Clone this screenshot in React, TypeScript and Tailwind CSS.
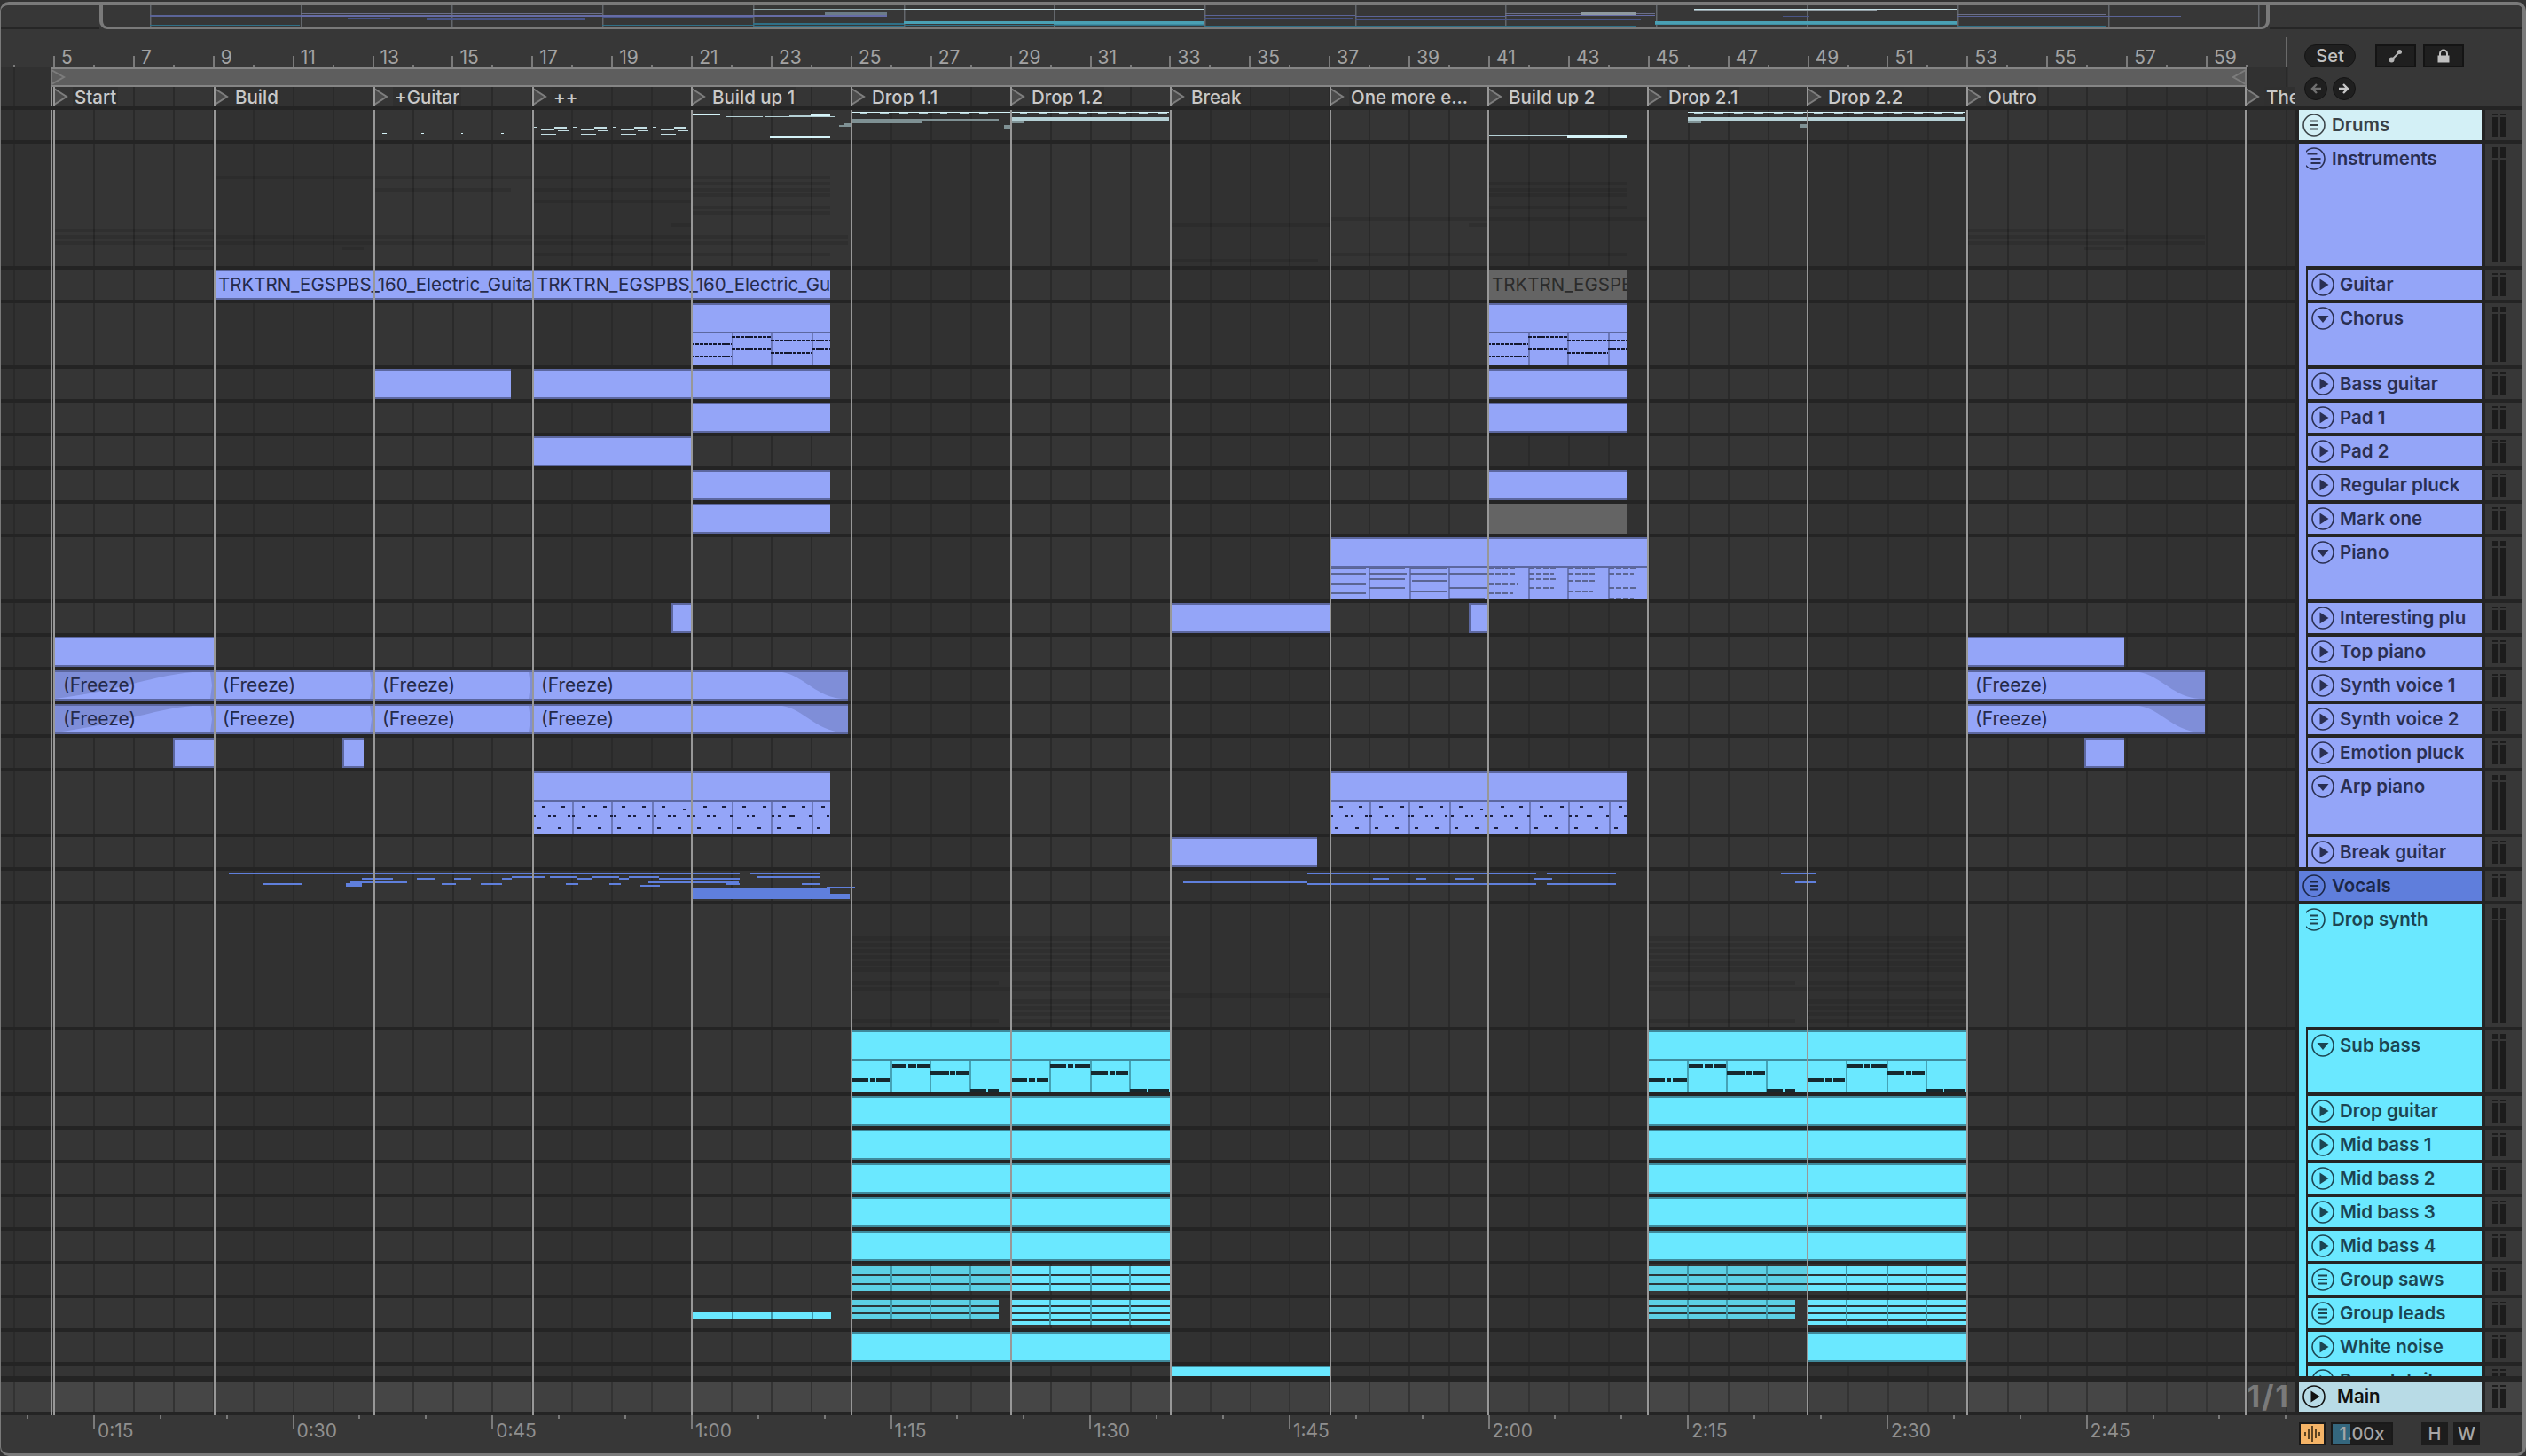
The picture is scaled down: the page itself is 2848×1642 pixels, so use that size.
import type { ReactNode } from 'react';

// all x values below are page pixels, the left column starts at x=1
const L = (x: number) => x - 1;
const barX = (bar: number) => Math.round(60 + (bar - 5) * 44.95);

const LOCATORS: [number, string][] = [
  [60, 'Start'],
  [241, 'Build'],
  [421, '+Guitar'],
  [600, '++'],
  [779, 'Build up 1'],
  [959, 'Drop 1.1'],
  [1139, 'Drop 1.2'],
  [1319, 'Break'],
  [1499, 'One more e...'],
  [1677, 'Build up 2'],
  [1857, 'Drop 2.1'],
  [2037, 'Drop 2.2'],
  [2217, 'Outro'],
  [2531, 'The'],
];

const Grid = ({ main = false }: { main?: boolean }) => {
  const bands = [];
  for (let b = 5; b < 61; b += 4) bands.push(b);
  const lines = [];
  for (let b = 4; b <= 61; b++) lines.push(barX(b));
  return (
    <div className={`absolute inset-0 ${main ? 'bg-[#404040]' : 'bg-[#313131]'}`}>
      {bands.map((b, i) =>
        i % 2 === 0 ? (
          <div
            key={b}
            className={`absolute top-0 bottom-0 ${main ? 'bg-[#464646]' : 'bg-[#353535]'}`}
            style={{ left: L(barX(b)), width: barX(b + 4) - barX(b) }}
          />
        ) : null,
      )}
      {lines.map((x) => (
        <div
          key={x}
          className={`absolute top-0 bottom-0 w-[2px] ${main ? 'bg-[#333333]' : 'bg-[#2a2a2a]'}`}
          style={{ left: L(x) }}
        />
      ))}
    </div>
  );
};

const LocatorLines = () => (
  <>
    {[57, ...LOCATORS.map((l) => l[0])].map((x) => (
      <div
        key={x}
        className="absolute top-0 bottom-0 z-20 w-[2px] bg-[#989898]"
        style={{ left: L(x) }}
      />
    ))}
  </>
);

const CLIP = {
  blue: {
    body: 'bg-[#94a5f8]',
    strip: 'bg-[#5c679f]',
    text: 'text-[#252a4a]',
    line: 'bg-[#6a77b8]',
  },
  cyan: {
    body: 'bg-[#6ae8ff]',
    strip: 'bg-[#3f8a9c]',
    text: 'text-[#1c4552]',
    line: 'bg-[#45a2b5]',
  },
  grey: {
    body: 'bg-[#646464]',
    strip: 'bg-[#646464]',
    text: 'text-[#2b2b2b]',
    line: 'bg-[#555555]',
  },
};

type ClipProps = {
  x0: number;
  x1: number;
  h?: number;
  theme?: keyof typeof CLIP;
  label?: string;
  edge?: boolean;
  split?: number;
  bars?: number[];
  noBottom?: boolean;
  children?: ReactNode;
};

const Clip = ({ x0, x1, h = 34, theme = 'blue', label, edge, split, bars, noBottom, children }: ClipProps) => {
  const t = CLIP[theme];
  return (
    <div
      className={`absolute top-0 overflow-hidden ${t.body}`}
      style={{ left: L(x0), width: x1 - x0, height: h }}
    >
      <div className={`absolute top-0 left-0 right-0 h-[2px] ${t.strip}`} />
      {split ? (
        <div className={`absolute left-0 right-0 h-[2px] ${t.strip}`} style={{ top: split }} />
      ) : noBottom ? null : (
        <div className={`absolute bottom-0 left-0 right-0 h-[2px] ${t.strip}`} />
      )}
      {edge ? <div className={`absolute top-0 bottom-0 left-0 w-[2px] ${t.strip}`} /> : null}
      {bars?.map((b) => (
        <div
          key={b}
          className={`absolute bottom-0 w-[2px] ${t.line}`}
          style={{ left: b - x0, top: (split ?? 0) + 2 }}
        />
      ))}
      {children}
      {label ? (
        <span className={`absolute top-[3px] left-[5px] text-[20.5px] leading-[28px] whitespace-nowrap ${t.text}`}>
          {label}
        </span>
      ) : null}
    </div>
  );
};

type Mark = [number, number, number, number];

const Marks = ({ list, className }: { list: Mark[]; className: string }) => (
  <>
    {list.map(([x0, x1, y, h], i) => (
      <div
        key={i}
        className={`absolute ${className}`}
        style={{ left: L(x0), width: x1 - x0, top: y, height: h }}
      />
    ))}
  </>
);

// notes and ghosts, y is local to the row
const shift = (list: Mark[], dx: number): Mark[] => list.map(([a, b, y, h]) => [a + dx, b + dx, y, h]);

const DASH = 'bg-[repeating-linear-gradient(90deg,#14182e_0px,#14182e_4px,transparent_4px,transparent_5px)]';

const Freeze = ({ x0, x1, fadeIn, fadeOut }: { x0: number; x1: number; fadeIn?: boolean; fadeOut?: boolean }) => {
  const w = x1 - x0;
  return (
    <Clip x0={x0} x1={x1}>
      <svg className="absolute inset-0" width={w} height={34}>
        {fadeIn ? <path d="M0 2 H156 C110 6 70 24 0 32 Z" fill="#7f8ed8" /> : null}
        {fadeOut ? <path d={`M${w - 74} 2 C${w - 50} 6 ${w - 36} 30 ${w - 6} 32 H${w} V2 Z`} fill="#7f8ed8" /> : null}
        <path d={`M${w - 4} 2 L${w} 2 L${w} 32 L${w - 4} 32 L${w - 2} 17 Z`} fill={fadeOut ? 'none' : '#7f8ed8'} />
      </svg>
      <span className="absolute top-[3px] left-[10px] text-[21px] leading-[28px] text-[#252a4a]">(Freeze)</span>
    </Clip>
  );
};

const chorusNotes = (x: number): Mark[] => [
  [x, x + 46, 45, 2],
  [x, x + 46, 59, 2],
  [x + 46, x + 90, 37, 2],
  [x + 46, x + 90, 51, 2],
  [x + 90, x + 136, 41, 2],
  [x + 90, x + 136, 55, 2],
  [x + 136, x + 157, 41, 2],
  [x + 136, x + 157, 51, 2],
];

const Chorus = ({ x }: { x: number }) => (
  <>
    <Clip x0={x} x1={x + 157} h={70} split={32} bars={[x + 46, x + 90, x + 136]} />
    <Marks list={chorusNotes(x)} className={DASH} />
  </>
);

const PIANO_A: Mark[] = [
  [1500, 1540, 34, 2], [1500, 1540, 40, 2], [1500, 1540, 52, 2], [1500, 1540, 62, 2],
  [1544, 1584, 34, 2], [1544, 1586, 40, 2], [1544, 1584, 46, 2], [1544, 1584, 56, 2],
  [1590, 1632, 34, 2], [1590, 1632, 40, 2], [1592, 1632, 48, 2], [1590, 1632, 60, 2],
  [1634, 1676, 40, 2], [1634, 1676, 56, 2], [1634, 1674, 68, 2],
];
const PIANO_B: Mark[] = [
  [1678, 1710, 34, 2], [1678, 1710, 40, 2], [1678, 1712, 52, 2], [1678, 1706, 62, 2],
  [1724, 1756, 34, 2], [1724, 1752, 40, 2], [1724, 1754, 46, 2], [1724, 1752, 56, 2],
  [1768, 1800, 34, 2], [1768, 1798, 40, 2], [1768, 1800, 48, 2], [1768, 1796, 60, 2],
  [1814, 1846, 34, 2], [1814, 1842, 40, 2], [1814, 1844, 56, 2], [1814, 1842, 68, 2],
];

const ARP_TOP = [611, 633, 656, 680, 701, 724, 746, 793, 814, 837, 860, 882, 904, 926];
const ARP_MID = [601, 618, 624, 640, 645, 663, 670, 688, 692, 708, 714, 730, 737, 753, 759, 775, 781, 797, 804, 823, 842, 848, 870, 877, 890, 893, 912, 932];
const arpDots = (dx: number): Mark[] => [
  ...ARP_TOP.map((x): Mark => [x + dx, x + dx + 4, 39, 2]),
  [770 + dx, 773 + dx, 42, 2],
  ...ARP_MID.map((x): Mark => [x + dx, x + dx + 3, 49, 2]),
  ...Array.from({ length: 15 }, (_, i): Mark => [606 + dx + i * 22.5, 610 + dx + i * 22.5, 63, 2]),
];

const Arp = ({ x0, x1, dx }: { x0: number; x1: number; dx: number }) => (
  <>
    <Clip x0={x0} x1={x1} h={70} split={32} bars={[645, 689, 735, 825, 869, 915].map((b) => b + dx)} />
    <Marks list={arpDots(dx)} className="bg-[#1c2040]" />
  </>
);

const SUB_BASS: Mark[] = [
  [960, 979, 54, 4], [981, 986, 54, 4], [988, 1004, 54, 4],
  [1006, 1022, 38, 4], [1024, 1033, 38, 4], [1034, 1048, 38, 4],
  [1049, 1070, 46, 4], [1071, 1077, 46, 4], [1078, 1092, 46, 4],
  [1094, 1112, 66, 4], [1114, 1126, 66, 4],
  [1140, 1158, 54, 4], [1160, 1167, 54, 4], [1169, 1182, 54, 4],
  [1184, 1202, 38, 4], [1204, 1210, 38, 4], [1212, 1229, 38, 4],
  [1230, 1249, 46, 4], [1251, 1257, 46, 4], [1258, 1272, 46, 4],
  [1274, 1293, 66, 4], [1294, 1318, 66, 4],
];

const SubBass = ({ dx }: { dx: number }) => (
  <>
    <Clip x0={959 + dx} x1={1139 + dx} theme="cyan" h={70} split={32} bars={[1004, 1048, 1093].map((b) => b + dx)} />
    <Clip x0={1139 + dx} x1={1319 + dx} theme="cyan" h={70} split={32} bars={[1183, 1229, 1273].map((b) => b + dx)} />
    <Marks list={shift(SUB_BASS, dx)} className="bg-[#16292f]" />
  </>
);

const Wide = ({ dx = 0 }: { dx?: number }) => (
  <>
    <Clip x0={959 + dx} x1={1139 + dx} theme="cyan" />
    <Clip x0={1139 + dx} x1={1319 + dx} theme="cyan" />
  </>
);

const Stripes = ({ x0, x1, top, bottom, lines, dim, bars }: { x0: number; x1: number; top: number; bottom: number; lines: number[]; dim?: boolean; bars: number[] }) => (
  <div
    className={`absolute ${dim ? 'bg-[#5ccfe4]' : 'bg-[#6ae8ff]'}`}
    style={{ left: L(x0), width: x1 - x0, top, height: bottom - top }}
  >
    {lines.map((y) => (
      <div key={y} className="absolute left-0 right-0 h-[2px] bg-[#2b3538]" style={{ top: y - top }} />
    ))}
    {bars.map((b) => (
      <div key={b} className="absolute top-0 bottom-0 w-[2px] bg-[#3f98aa]" style={{ left: b - x0 }} />
    ))}
  </div>
);

const Saws = ({ dx }: { dx: number }) => (
  <>
    <Stripes x0={959 + dx} x1={1139 + dx} top={2} bottom={30} lines={[11, 21]} dim bars={[1004 + dx, 1048 + dx, 1093 + dx]} />
    <Stripes x0={1139 + dx} x1={1319 + dx} top={2} bottom={30} lines={[11, 21]} bars={[1183 + dx, 1229 + dx, 1273 + dx]} />
  </>
);

const Leads = ({ dx }: { dx: number }) => (
  <>
    <Stripes x0={959 + dx} x1={1126 + dx} top={2} bottom={23} lines={[8, 16]} dim bars={[1004 + dx, 1048 + dx, 1093 + dx]} />
    <Stripes x0={1139 + dx} x1={1319 + dx} top={2} bottom={30} lines={[8, 16, 24]} bars={[1183 + dx, 1229 + dx, 1273 + dx]} />
  </>
);

const GHOST_INST: Mark[] = [
  [241, 936, 36, 4],
  [779, 936, 43, 4], [1677, 1834, 43, 4],
  [421, 576, 50, 4], [600, 936, 50, 4], [1677, 1834, 50, 4],
  [779, 936, 56, 4], [1677, 1834, 56, 4],
  [600, 779, 63, 4],
  [779, 936, 70, 4], [1677, 1834, 70, 4],
  [779, 936, 76, 4],
  [1499, 1857, 83, 4],
  [757, 779, 90, 4], [1319, 1499, 90, 4], [1656, 1677, 90, 4],
  [61, 241, 96, 4], [2217, 2395, 96, 4],
  [61, 956, 103, 4], [2217, 2486, 103, 4],
  [61, 956, 110, 4], [2217, 2486, 110, 4],
  [195, 241, 116, 4], [386, 410, 116, 4], [2350, 2395, 116, 4],
  [600, 936, 123, 4], [1499, 1834, 123, 4],
  [1319, 1486, 130, 4],
];

const ghostDropBase: Mark[] = [
  [959, 1319, 36, 5], [959, 1319, 43, 5], [959, 1319, 50, 5], [959, 1319, 57, 5],
  [959, 1319, 64, 5], [959, 1319, 71, 5],
  [959, 1126, 86, 5], [1139, 1319, 86, 5],
  [959, 1139, 93, 5], [1139, 1319, 93, 5],
  [1139, 1319, 107, 5], [1139, 1319, 114, 5], [1139, 1319, 121, 5],
  [959, 1126, 129, 5], [1139, 1319, 129, 5],
];
const GHOST_DROP: Mark[] = [...ghostDropBase, ...shift(ghostDropBase, 898), [1319, 1499, 100, 5]];

const DRUM_BRIGHT: Mark[] = [
  [780, 812, 4, 2], [812, 842, 4, 1], [868, 936, 29, 3], [914, 936, 5, 2],
  [960, 1139, 2, 1], [1140, 1318, 2, 1], [1903, 2216, 2, 1],
  [1767, 1834, 28, 4],
  [431, 436, 26, 1], [475, 478, 26, 1], [520, 522, 26, 1], [565, 568, 26, 1],
];
const DRUM_MID: Mark[] = [
  [818, 860, 7, 1], [862, 942, 7, 1], [890, 914, 6, 1],
  [1140, 1318, 8, 5], [1903, 2216, 8, 5], [1677, 1767, 28, 1],
  [970, 978, 3, 1], [992, 1002, 3, 1], [1014, 1024, 3, 1], [1036, 1046, 3, 1], [1060, 1068, 3, 1], [1082, 1092, 3, 1], [1104, 1114, 3, 1],
  [1150, 1158, 3, 1], [1172, 1180, 3, 1], [1194, 1204, 3, 1], [1216, 1226, 3, 1], [1238, 1248, 3, 1], [1262, 1270, 3, 1], [1284, 1294, 3, 1], [1306, 1316, 3, 1],
  ...Array.from({ length: 14 }, (_, i): Mark => [1910 + i * 22.5, 1920 + i * 22.5, 3, 1]),
];
const DRUM_DIM: Mark[] = [
  [960, 1126, 10, 2], [960, 1040, 13, 2], [952, 959, 15, 4], [946, 952, 17, 2], [1132, 1139, 17, 4],
  [1140, 1155, 13, 2], [1903, 1918, 13, 2], [2030, 2037, 16, 4],
];
const ppBlock = (x: number): Mark[] => [
  [x, x + 4, 19, 1], [x + 9, x + 24, 21, 2], [x + 24, x + 38, 19, 2], [x + 9, x + 26, 27, 1], [x + 28, x + 40, 23, 1],
];
const DRUM_PP: Mark[] = [...ppBlock(601), ...ppBlock(646), ...ppBlock(691), ...ppBlock(736)];

const VOCAL: Mark[] = [
  [258, 834, 2, 2], [846, 924, 2, 2],
  [408, 443, 8, 2], [470, 490, 8, 2], [512, 531, 8, 2], [566, 577, 8, 2], [577, 615, 6, 2], [620, 650, 6, 2],
  [650, 668, 8, 2], [668, 698, 6, 2], [698, 709, 8, 2], [709, 743, 6, 2], [743, 762, 8, 2], [762, 834, 8, 2], [853, 924, 6, 2],
  [395, 459, 12, 2], [731, 833, 12, 2],
  [296, 340, 14, 2], [390, 408, 14, 4], [498, 514, 14, 2], [542, 566, 14, 2], [638, 652, 14, 2], [687, 700, 14, 2], [722, 744, 16, 2], [818, 834, 14, 2], [904, 924, 14, 2],
  [779, 936, 20, 12], [936, 958, 26, 6], [932, 964, 18, 2],
  [1334, 1474, 12, 2], [1474, 1732, 2, 2], [1744, 1822, 2, 2], [1548, 1566, 8, 2], [1596, 1608, 8, 2], [1640, 1662, 8, 2], [1730, 1750, 8, 2],
  [1474, 1732, 14, 2], [1744, 1822, 14, 2], [2008, 2048, 2, 2], [2024, 2048, 12, 2],
];

type Track = {
  name: string;
  pitch: number;
  theme: 'blue' | 'cyan' | 'drums' | 'vocals';
  icon: 'lines' | 'stagger' | 'play' | 'down';
  level: 'top' | 'group' | 'sub';
  sep?: number;
  lastInGroup?: boolean;
  content?: ReactNode;
};

const TRACKS: Track[] = [
  {
    name: 'Drums', pitch: 38, theme: 'drums', icon: 'lines', level: 'top',
    content: (
      <>
        <Marks list={DRUM_PP} className="bg-[#c4dfe4]" />
        <Marks list={DRUM_DIM} className="bg-[#7f9194]" />
        <Marks list={DRUM_MID} className="bg-[#b5d0d5]" />
        <Marks list={DRUM_BRIGHT} className="bg-[#d5f3f8]" />
      </>
    ),
  },
  { name: 'Instruments', pitch: 142, theme: 'blue', icon: 'stagger', level: 'group', content: <Marks list={GHOST_INST} className="bg-black/10" /> },
  {
    name: 'Guitar', pitch: 38, theme: 'blue', icon: 'play', level: 'sub',
    content: (
      <>
        <Clip x0={241} x1={600} label="TRKTRN_EGSPBS_160_Electric_Guitar" />
        <Clip x0={600} x1={936} label="TRKTRN_EGSPBS_160_Electric_Guitar" />
        <Clip x0={1677} x1={1834} theme="grey" label="TRKTRN_EGSPBS" />
      </>
    ),
  },
  { name: 'Chorus', pitch: 74, theme: 'blue', icon: 'down', level: 'sub', content: (<><Chorus x={779} /><Chorus x={1677} /></>) },
  { name: 'Bass guitar', pitch: 38, theme: 'blue', icon: 'play', level: 'sub', content: (<><Clip x0={421} x1={576} /><Clip x0={600} x1={936} /><Clip x0={1677} x1={1834} /></>) },
  { name: 'Pad 1', pitch: 38, theme: 'blue', icon: 'play', level: 'sub', content: (<><Clip x0={779} x1={936} /><Clip x0={1677} x1={1834} /></>) },
  { name: 'Pad 2', pitch: 38, theme: 'blue', icon: 'play', level: 'sub', content: <Clip x0={600} x1={779} /> },
  { name: 'Regular pluck', pitch: 38, theme: 'blue', icon: 'play', level: 'sub', content: (<><Clip x0={779} x1={936} /><Clip x0={1677} x1={1834} /></>) },
  { name: 'Mark one', pitch: 38, theme: 'blue', icon: 'play', level: 'sub', content: (<><Clip x0={779} x1={936} /><Clip x0={1677} x1={1834} theme="grey" /></>) },
  {
    name: 'Piano', pitch: 74, theme: 'blue', icon: 'down', level: 'sub',
    content: (
      <>
        <Clip x0={1500} x1={1857} h={70} split={32} bars={[1543, 1589, 1633, 1723, 1767, 1813]} />
        <Marks list={PIANO_A} className="bg-[#5b6592]" />
        <Marks list={PIANO_B} className="bg-[repeating-linear-gradient(90deg,#5b6592_0px,#5b6592_6px,transparent_6px,transparent_8px)]" />
      </>
    ),
  },
  { name: 'Interesting plu', pitch: 38, theme: 'blue', icon: 'play', level: 'sub', content: (<><Clip x0={757} x1={779} edge /><Clip x0={1319} x1={1499} /><Clip x0={1656} x1={1677} edge /></>) },
  { name: 'Top piano', pitch: 38, theme: 'blue', icon: 'play', level: 'sub', content: (<><Clip x0={61} x1={241} /><Clip x0={2217} x1={2395} /></>) },
  {
    name: 'Synth voice 1', pitch: 38, theme: 'blue', icon: 'play', level: 'sub',
    content: (
      <>
        <Freeze x0={61} x1={241} fadeIn />
        <Freeze x0={241} x1={421} />
        <Freeze x0={421} x1={600} />
        <Freeze x0={600} x1={956} fadeOut />
        <Freeze x0={2217} x1={2486} fadeOut />
      </>
    ),
  },
  {
    name: 'Synth voice 2', pitch: 38, theme: 'blue', icon: 'play', level: 'sub',
    content: (
      <>
        <Freeze x0={61} x1={241} fadeIn />
        <Freeze x0={241} x1={421} />
        <Freeze x0={421} x1={600} />
        <Freeze x0={600} x1={956} fadeOut />
        <Freeze x0={2217} x1={2486} fadeOut />
      </>
    ),
  },
  { name: 'Emotion pluck', pitch: 38, theme: 'blue', icon: 'play', level: 'sub', content: (<><Clip x0={195} x1={241} edge /><Clip x0={386} x1={410} edge /><Clip x0={2350} x1={2395} edge /></>) },
  { name: 'Arp piano', pitch: 74, theme: 'blue', icon: 'down', level: 'sub', content: (<><Arp x0={600} x1={936} dx={0} /><Arp x0={1499} x1={1834} dx={899} /></>) },
  { name: 'Break guitar', pitch: 38, theme: 'blue', icon: 'play', level: 'sub', lastInGroup: true, content: <Clip x0={1320} x1={1485} /> },
  { name: 'Vocals', pitch: 38, theme: 'vocals', icon: 'lines', level: 'top', content: <Marks list={VOCAL} className="bg-[#5f7fdc]" /> },
  { name: 'Drop synth', pitch: 142, theme: 'cyan', icon: 'lines', level: 'group', content: <Marks list={GHOST_DROP} className="bg-black/10" /> },
  { name: 'Sub bass', pitch: 74, theme: 'cyan', icon: 'down', level: 'sub', content: (<><SubBass dx={0} /><SubBass dx={898} /></>) },
  { name: 'Drop guitar', pitch: 38, theme: 'cyan', icon: 'play', level: 'sub', content: (<><Wide /><Wide dx={898} /></>) },
  { name: 'Mid bass 1', pitch: 38, theme: 'cyan', icon: 'play', level: 'sub', content: (<><Wide /><Wide dx={898} /></>) },
  { name: 'Mid bass 2', pitch: 38, theme: 'cyan', icon: 'play', level: 'sub', content: (<><Wide /><Wide dx={898} /></>) },
  { name: 'Mid bass 3', pitch: 38, theme: 'cyan', icon: 'play', level: 'sub', content: (<><Wide /><Wide dx={898} /></>) },
  { name: 'Mid bass 4', pitch: 38, theme: 'cyan', icon: 'play', level: 'sub', content: (<><Wide /><Wide dx={898} /></>) },
  { name: 'Group saws', pitch: 38, theme: 'cyan', icon: 'lines', level: 'sub', content: (<><Saws dx={0} /><Saws dx={898} /></>) },
  {
    name: 'Group leads', pitch: 38, theme: 'cyan', icon: 'lines', level: 'sub',
    content: (
      <>
        <Stripes x0={779} x1={937} top={16} bottom={23} lines={[]} bars={[825, 869, 915]} />
        <Leads dx={0} />
        <Leads dx={898} />
      </>
    ),
  },
  { name: 'White noise', pitch: 38, theme: 'cyan', icon: 'play', level: 'sub', content: (<><Clip x0={959} x1={1139} theme="cyan" /><Clip x0={1139} x1={1319} theme="cyan" /><Clip x0={2037} x1={2217} theme="cyan" /></>) },
  { name: 'Reverb tail', pitch: 18, sep: 6, theme: 'cyan', icon: 'play', level: 'sub', lastInGroup: true, content: <Clip x0={1320} x1={1499} h={12} theme="cyan" noBottom /> },
];

const HEAD = {
  blue: { bg: 'bg-[#94a5f8]', text: 'text-[#2a2f52]' },
  cyan: { bg: 'bg-[#6ae8ff]', text: 'text-[#1c4552]' },
  drums: { bg: 'bg-[#d3f0f6]', text: 'text-[#3a4246]' },
  vocals: { bg: 'bg-[#5f7edc]', text: 'text-[#1c2748]' },
};

const TrackIcon = ({ icon }: { icon: Track['icon'] }) => (
  <svg width="26" height="26" viewBox="0 0 26 26" className="shrink-0" fill="currentColor">
    <circle cx="13" cy="13" r="12" fill="none" stroke="currentColor" strokeWidth="1.6" />
    {icon === 'play' ? <polygon points="9.5,6.5 19.5,13 9.5,19.5" /> : null}
    {icon === 'down' ? <polygon points="6.5,10 19.5,10 13,18" /> : null}
    {icon === 'lines' ? (
      <path d="M8 8.5h10M8 13h10M8 17.5h10" stroke="currentColor" strokeWidth="1.9" fill="none" />
    ) : null}
    {icon === 'stagger' ? (
      <path d="M5.5 7.5h11M9.5 13h11M9.5 18h11" stroke="currentColor" strokeWidth="1.9" fill="none" />
    ) : null}
  </svg>
);

const Meter = ({ h, main = false }: { h: number; main?: boolean }) => {
  const cap = h > 100 ? 12 : h > 40 ? 6 : 2;
  return (
    <div className={`w-[42px] flex gap-[3px] pl-[8px] overflow-hidden ${main ? 'bg-[#434343]' : 'bg-[#373737]'}`} style={{ height: h }}>
      {[0, 1].map((i) => (
        <div key={i} className="w-[6px] shrink-0 flex flex-col gap-[2px] pt-[4px] pb-[4px]" style={{ height: Math.max(h, 34) }}>
          <div className="bg-[#1c1c1c] shrink-0" style={{ height: cap }} />
          <div className="bg-[#1c1c1c] flex-1" />
        </div>
      ))}
    </div>
  );
};

const TrackRow = ({ track }: { track: Track }) => {
  const sep = track.sep ?? 4;
  const t = HEAD[track.theme];
  const inner = track.pitch - sep;
  const sub = track.level === 'sub';
  return (
    <div className="relative flex" style={{ height: track.pitch }}>
      <div className="relative w-[2591px] h-full border-r-4 border-[#242424] flex flex-col">
        <div className="relative w-full" style={{ height: inner }}>
          {track.content}
        </div>
        <div className="bg-[#242424] flex-1" />
      </div>
      <div className={`w-[206px] h-full flex font-semibold text-[20.5px] ${t.text}`}>
        {track.level !== 'top' ? (
          <div className="w-[8px] h-full flex flex-col shrink-0">
            <div className={`flex-1 ${t.bg}`} />
            {track.lastInGroup ? <div className="bg-[#242424]" style={{ height: sep }} /> : null}
          </div>
        ) : null}
        {sub ? <div className="w-[2px] h-full bg-[#242424] shrink-0" /> : null}
        <div className="flex-1 h-full flex flex-col min-w-0">
          <div className={`overflow-hidden ${t.bg}`} style={{ height: inner }}>
            <div className={`flex items-center h-[34px] ${sub ? 'pl-[4px] gap-[6px]' : track.level === 'group' ? 'gap-[7px] -ml-[4px]' : 'pl-[4px] gap-[7px]'}`}>
              <TrackIcon icon={track.icon} />
              <span className="whitespace-nowrap overflow-hidden">{track.name}</span>
            </div>
          </div>
          <div className="bg-[#242424] flex-1" />
        </div>
      </div>
      <div className="w-[4px] h-full bg-[#242424]" />
      <div className="flex flex-col">
        <Meter h={inner} />
        <div className="bg-[#242424] flex-1" />
      </div>
    </div>
  );
};

type OvRect = [number, number, number, number, string];
const OVERVIEW: OvRect[] = [
  [169, 339, 15, 2, '#5b6498'], [339, 679, 13, 1, '#6b6f8a'], [339, 1000, 15, 2, '#666ca6'],
  [481, 660, 18, 2, '#4a5688'], [392, 440, 18, 1, '#4a5688'], [679, 849, 17, 1, '#4a5688'],
  [169, 338, 26, 1, '#2f6f86'], [274, 350, 28, 1, '#2f6f86'], [510, 679, 28, 1, '#2f6f86'], [679, 849, 26, 1, '#2f6f86'],
  [679, 849, 28, 1, '#2f6f86'], [849, 1019, 24, 2, '#2f6f86'], [849, 1019, 27, 1, '#2f6f86'],
  [690, 770, 11, 1, '#8f9aa0'], [775, 840, 11, 1, '#8f9aa0'], [849, 1019, 8, 1, '#8fa6aa'], [930, 1000, 12, 3, '#6c7c88'],
  [1019, 1358, 8, 1, '#c6e3e8'], [1019, 1358, 22, 3, '#4aa0b4'], [1019, 1358, 26, 1, '#2f6f86'], [1188, 1358, 25, 1, '#3f8ea2'],
  [1358, 1528, 15, 1, '#5b6498'], [1358, 1526, 18, 1, '#4a5688'], [1358, 1528, 27, 1, '#2f6f86'],
  [1528, 1697, 16, 1, '#5b6498'], [1528, 1697, 19, 1, '#4a5688'], [1528, 1697, 27, 1, '#2f6f86'],
  [1697, 1866, 13, 1, '#6b6f8a'], [1697, 1866, 15, 1, '#666ca6'], [1782, 1845, 12, 3, '#8f9aa0'], [1697, 1850, 19, 1, '#4a5688'], [1697, 1845, 27, 2, '#2f6f86'],
  [1910, 2207, 8, 1, '#c6e3e8'], [1910, 2116, 9, 1, '#8f9aa0'], [1866, 2207, 22, 3, '#4aa0b4'], [1866, 2207, 25, 1, '#3f8ea2'], [2010, 2040, 16, 1, '#4a5688'],
  [2207, 2459, 16, 1, '#5b6498'], [2207, 2375, 14, 1, '#6b6f8a'], [2207, 2375, 28, 1, '#2f6f86'], [2207, 2375, 27, 1, '#2f6f86'],
];

const Overview = () => (
  <div className="flex h-[27px]">
    <div className="w-[111px] bg-[#373737] border-b-[3px] border-[#262626] rounded-tl-[8px]" />
    <div className="w-[2447px] bg-[#373737] border-x-4 border-b-[3px] border-[#7a7a7a] rounded-b-[9px] overflow-hidden">
      <svg width="2439" height="24" viewBox="116 6 2439 24" className="block">
        {[169, 339, 509, 679, 849, 1019, 1188, 1358, 1528, 1697, 1867, 2037, 2207, 2377, 2546].map((x) => (
          <rect key={x} x={x} y={6} width="1.5" height="24" fill="#63676c" />
        ))}
        {OVERVIEW.map(([a, b, y, h, c], i) => (
          <rect key={i} x={a} y={y + 2} width={b - a} height={h} fill={c} />
        ))}
      </svg>
    </div>
    <div className="flex-1 bg-[#373737] border-b-[3px] border-[#262626]" />
  </div>
);

const BAR_LABELS = Array.from({ length: 28 }, (_, i) => 5 + i * 2);

const BarRuler = () => (
  <div className="flex h-[43px] pl-[14px] bg-[#373737]">
    <div className="relative w-[45px] h-full">
      <div className="absolute bottom-0 left-0 w-[2px] h-[3px] bg-[#7a7a7a]" />
    </div>
    {BAR_LABELS.map((n) => (
      <div key={n} className="relative w-[89.9px] h-full shrink-0 flex items-end">
        <div className="w-[2px] h-[13px] bg-[#7a7a7a] shrink-0" />
        <span className="pl-[7px] text-[21px] leading-[22px] text-[#a3a3a3]">{n}</span>
        <div className="absolute bottom-0 left-[45px] w-[2px] h-[3px] bg-[#7a7a7a]" />
      </div>
    ))}
    <div className="w-[2px] h-[34px] self-end bg-[#6a6a6a]" />
  </div>
);

const LoopStrip = () => (
  <div className="relative h-[22px] w-[2579px] overflow-hidden">
    <Grid />
    <div className="relative ml-[56px] w-[2476px] h-full bg-[#5e5e5e] border-y-2 border-[#858585] flex justify-between items-center">
      <svg width="17" height="18" viewBox="0 0 17 18">
        <path d="M1 1 L15 9 L1 17 Z" fill="#5e5e5e" stroke="#7c7c7c" strokeWidth="2" />
      </svg>
      <svg width="17" height="18" viewBox="0 0 17 18">
        <path d="M16 1 L2 9 L16 17 Z" fill="#5e5e5e" stroke="#7c7c7c" strokeWidth="2" />
      </svg>
    </div>
  </div>
);

const LocatorRow = () => (
  <div className="relative h-[22px] w-[2587px] overflow-hidden">
    <Grid />
    {LOCATORS.map(([x, name]) => (
      <div key={x} className="absolute top-0 h-full flex items-center" style={{ left: L(x) }}>
        <svg width="17" height="20" viewBox="0 0 17 20" className="shrink-0">
          <path d="M1 1 L15 10 L1 19 Z" fill="#4b4b4b" stroke="#7e7e7e" strokeWidth="2" />
        </svg>
        <span className="ml-[5px] px-[2px] pt-[2px] h-full bg-[#303030] text-[20.5px] leading-[20px] font-medium text-[#c9c9c9] whitespace-nowrap">
          {name}
        </span>
      </div>
    ))}
    <LocatorLines />
  </div>
);

const SetPanel = () => (
  <div className="flex-1 flex flex-col pt-[17px] pl-[6px] bg-[#373737]">
    <div className="flex items-center h-[26px]">
      <div className="w-[58px] h-full rounded-full bg-[#1f1f1f] border border-[#141414] flex items-center justify-center text-[20px] font-medium text-[#c0c0c0]">
        Set
      </div>
      <div className="ml-[22px] w-[46px] h-full bg-[#1f1f1f] border-2 border-[#141414] flex items-center justify-center">
        <svg width="16" height="16" viewBox="0 0 16 16">
          <path d="M4 12 L12 4" stroke="#b5b5b5" strokeWidth="2" />
          <circle cx="3.5" cy="12.5" r="3" fill="#b5b5b5" />
          <circle cx="12.5" cy="3.5" r="2.5" fill="#b5b5b5" />
        </svg>
      </div>
      <div className="ml-[8px] w-[46px] h-full bg-[#1f1f1f] border-2 border-[#141414] flex items-center justify-center">
        <svg width="16" height="16" viewBox="0 0 16 16">
          <path d="M4 8 V5.5 a4 4 0 0 1 8 0 V8" fill="none" stroke="#c0c0c0" strokeWidth="2" />
          <rect x="1.5" y="7.5" width="13" height="8" fill="#c0c0c0" />
        </svg>
      </div>
    </div>
    <div className="flex gap-[6px] mt-[11px]">
      {['M13 7 L8 12 L13 17 M8 12 H18', 'M11 7 L16 12 L11 17 M6 12 H16'].map((d, i) => (
        <div key={d} className="w-[26px] h-[26px] rounded-full bg-[#1f1f1f] border border-[#141414] flex items-center justify-center">
          <svg width="24" height="24" viewBox="0 0 24 24">
            <path d={d} fill="none" stroke={i === 0 ? '#707070' : '#c8c8c8'} strokeWidth="2.4" />
          </svg>
        </div>
      ))}
    </div>
  </div>
);

const TIME_TICKS = Array.from({ length: 35 }, (_, i) => 10 + i * 5);
const timeLabel = (s: number) => `${Math.floor(s / 60)}:${String(s % 60).padStart(2, '0')}`;

const TimeRuler = () => (
  <div className="flex w-[2591px] pl-[29px] h-full">
    {TIME_TICKS.map((s) => (
      <div key={s} className="relative w-[74.9px] shrink-0 h-full flex items-start">
        {s % 15 === 0 && s < 180 ? (
          <>
            <div className="w-[2px] h-[16px] bg-[#7a7a7a] shrink-0" />
            <div className="w-[3px] h-[1px] mt-[15px] bg-[#7a7a7a] shrink-0" />
            <span className="pt-[5px] text-[21px] leading-[26px] text-[#8f8f8f]">{timeLabel(s)}</span>
          </>
        ) : (
          <div className="w-[2px] h-[4px] bg-[#7a7a7a]" />
        )}
      </div>
    ))}
  </div>
);

const BottomRight = () => (
  <div className="flex items-center h-[26px] mt-[8px] text-[20px] font-medium text-[#a6a6a6]">
    <div className="w-[30px] h-full bg-[#f5b467] border-2 border-[#1a1a1a] flex items-center justify-center">
      <svg width="20" height="18" viewBox="0 0 20 18">
        <path d="M2 7v4M6 3v12M10 0v18M14 4v10M18 7v4" stroke="#3a2a12" strokeWidth="1.6" />
      </svg>
    </div>
    <div className="ml-[6px] w-[70px] h-full bg-[linear-gradient(90deg,#34677e_20px,#1d1d1d_20px)] border-2 border-[#1a1a1a] flex items-center justify-center">
      1.00x
    </div>
    <div className="ml-[32px] w-[30px] h-full bg-[#1d1d1d] flex items-center justify-center">H</div>
    <div className="ml-[6px] w-[30px] h-full bg-[#1d1d1d] flex items-center justify-center">W</div>
  </div>
);

export default function App() {
  return (
    <div className="w-[2848px] h-[1642px] pt-[2px] bg-[#333333] overflow-hidden font-[Inter]">
      <div className="w-full h-[1640px] flex flex-col border-t-4 border-r-4 border-b-[3px] border-l border-[#7a7a7a] rounded-[10px] overflow-hidden bg-[#373737]">
        <Overview />
        <div className="flex h-[87px]">
          <div className="w-[2591px] flex flex-col">
            <BarRuler />
            <LoopStrip />
            <LocatorRow />
          </div>
          <SetPanel />
        </div>
        <div className="h-[4px] bg-[#242424]" />
        <div className="relative">
          <div className="absolute top-0 bottom-0 left-0 w-[2587px]">
            <Grid />
          </div>
          {TRACKS.map((track) => (
            <TrackRow key={track.name} track={track} />
          ))}
          <div className="absolute top-0 bottom-0 left-0 w-[2587px]">
            <LocatorLines />
          </div>
        </div>
        <div className="relative flex h-[38px]">
          <div className="absolute top-0 left-0 w-[2587px] h-[34px]">
            <Grid main />
          </div>
          <div className="relative w-[2591px] h-full border-r-4 border-[#242424] flex flex-col">
            <div className="flex-1 relative">
              <span className="absolute right-[6px] top-[-2px] text-[34px] leading-[38px] font-bold tracking-[2px] text-[#7a7a7a]">
                1/1
              </span>
            </div>
            <div className="h-[4px] bg-[#242424]" />
          </div>
          <div className="w-[206px] h-full flex flex-col">
            <div className="h-[34px] bg-[#b8dbe6] flex items-center pl-[4px] gap-[13px] text-[20.5px] font-semibold text-[#111111]">
              <TrackIcon icon="play" />
              <span>Main</span>
            </div>
            <div className="h-[4px] bg-[#242424]" />
          </div>
          <div className="w-[4px] h-full bg-[#242424]" />
          <div className="flex flex-col">
            <Meter h={34} main />
            <div className="h-[4px] bg-[#242424]" />
          </div>
          <div className="absolute top-0 bottom-0 left-0 w-[2587px]">
            <LocatorLines />
          </div>
        </div>
        <div className="flex-1 flex">
          <TimeRuler />
          <BottomRight />
        </div>
      </div>
    </div>
  );
}
